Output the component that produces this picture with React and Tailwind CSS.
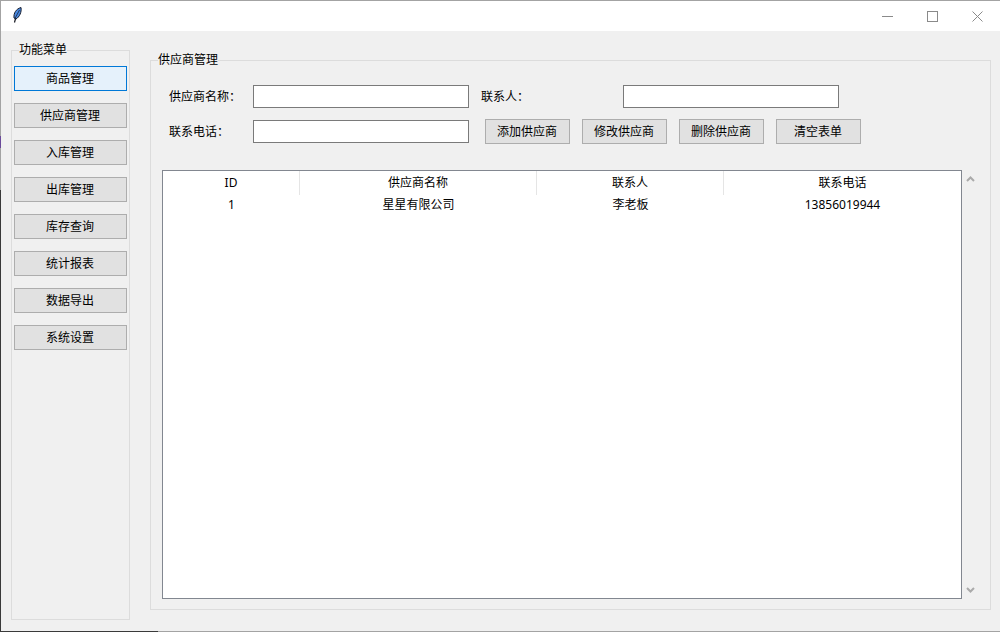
const menus = ['商品管理', '供应商管理', '入库管理', '出库管理', '库存查询', '统计报表', '数据导出', '系统设置']
const actions = ['添加供应商', '修改供应商', '删除供应商', '清空表单']
const colClass = 'grid grid-cols-[137px_237px_187px_237px]'

function Feather() {
  return (
    <svg width="9" height="16" viewBox="0 0 9 16" fill="none" className="-mt-[2px]">
      <path d="M1.5 15.5 L2.8 10.5" stroke="#10131c" strokeWidth="1.2" />
      <path d="M1 11 C0.5 6 3 2 8 0.5 C8.8 5 6.5 10 3 12 Z" fill="#4a8ae0" stroke="#141a2a" strokeWidth="1" />
      <path d="M2.2 11 L6.5 3" stroke="#15203a" strokeWidth="0.8" />
    </svg>
  )
}

function WindowButtons() {
  return (
    <div className="flex text-[#8a8a8a]">
      <div className="w-[45px] h-[30px] flex items-center justify-center">
        <svg width="11" height="11" viewBox="0 0 11 11"><path d="M0 5.5H11" stroke="currentColor" /></svg>
      </div>
      <div className="w-[45px] h-[30px] flex items-center justify-center">
        <svg width="11" height="11" viewBox="0 0 11 11"><rect x="0.5" y="0.5" width="10" height="10" fill="none" stroke="currentColor" /></svg>
      </div>
      <div className="w-[45px] h-[30px] flex items-center justify-center">
        <svg width="11" height="11" viewBox="0 0 11 11"><path d="M0.5 0.5L10.5 10.5M10.5 0.5L0.5 10.5" stroke="currentColor" /></svg>
      </div>
    </div>
  )
}

function Chevron({ down }) {
  return (
    <svg width="9" height="6" viewBox="0 0 9 6" className={down ? 'rotate-180' : ''}>
      <path d="M1 5L4.5 1.5L8 5" fill="none" stroke="#aaaaaa" strokeWidth="2" />
    </svg>
  )
}

export default function App() {
  return (
    <div
      className="w-[1000px] h-[632px] overflow-hidden flex bg-[#f0f0f0] text-xs text-black"
      style={{ fontFamily: '"Noto Sans", "Noto Sans CJK SC", sans-serif' }}
    >
      <div className="w-px shrink-0 flex flex-col">
        <div className="h-[136px] bg-[#a3a3a3]" />
        <div className="h-3 bg-[#6a4a9a]" />
        <div className="h-[42px] bg-[#a3a3a3]" />
        <div className="flex-1 bg-[#3a3a3a]" />
      </div>

      <div className="flex-1 flex flex-col min-w-0">
        <div className="h-px bg-[#a3a3a3] shrink-0" />
        <div className="h-[30px] bg-white flex items-center justify-between pl-3 shrink-0">
          <Feather />
          <WindowButtons />
        </div>

        <div className="flex flex-1 pl-[10px] gap-5">
          <fieldset className="w-[119px] h-[579px] mt-[10px] border border-[#dcdcdc] px-[2px] pt-[7px]">
            <legend className="ml-[5px] h-[18px] leading-[18px]">功能菜单</legend>
            <div className="flex flex-col gap-3">
              {menus.map((m, i) => (
                <button
                  key={m}
                  className={
                    'h-[25px] border text-xs pr-px ' +
                    (i === 0 ? 'bg-[#e5f1fb] border-[#0078d7]' : 'bg-[#e1e1e1] border-[#adadad]')
                  }
                >
                  {m}
                </button>
              ))}
            </div>
          </fieldset>

          <fieldset className="w-[841px] h-[559px] mt-5 border border-[#dcdcdc] pt-4">
            <legend className="ml-[7px] h-[18px] leading-[18px]">供应商管理</legend>

            <div className="pl-[18px] flex flex-col gap-[11px]">
              <div className="flex items-center h-[23px]">
                <label className="w-[84px]">供应商名称：</label>
                <input className="w-[216px] h-[23px] bg-white border border-[#7a7a7a]" />
                <label className="w-[142px] ml-3">联系人：</label>
                <input className="w-[216px] h-[23px] bg-white border border-[#7a7a7a]" />
              </div>
              <div className="flex items-center h-[25px]">
                <label className="w-[84px]">联系电话：</label>
                <input className="w-[216px] h-[23px] bg-white border border-[#7a7a7a]" />
                <div className="flex gap-3 ml-4">
                  {actions.map((a) => (
                    <button key={a} className="w-[85px] h-[25px] bg-[#e1e1e1] border border-[#adadad] text-xs pr-px">
                      {a}
                    </button>
                  ))}
                </div>
              </div>
            </div>

            <div className="flex mt-[26px] pl-[11px]">
              <div className="w-[800px] h-[429px] bg-white border border-[#828790]">
                <div className={colClass + ' h-6 items-center text-center'}>
                  <div className="h-full flex items-center justify-center border-r border-[#e5e5e5]">ID</div>
                  <div className="h-full flex items-center justify-center border-r border-[#e5e5e5]">供应商名称</div>
                  <div className="h-full flex items-center justify-center border-r border-[#e5e5e5]">联系人</div>
                  <div className="h-full flex items-center justify-center">联系电话</div>
                </div>
                <div className={colClass + ' h-5 items-center text-center'}>
                  <div>1</div>
                  <div>星星有限公司</div>
                  <div>李老板</div>
                  <div>13856019944</div>
                </div>
              </div>
              <div className="w-[17px] h-[429px] flex flex-col items-center justify-between py-[6px]">
                <Chevron />
                <Chevron down />
              </div>
            </div>
          </fieldset>
        </div>

        <div className="flex h-px shrink-0">
          <div className="w-[157px] bg-[#3a3a3a]" />
          <div className="flex-1 bg-[#a3a3a3]" />
        </div>
      </div>
    </div>
  )
}
